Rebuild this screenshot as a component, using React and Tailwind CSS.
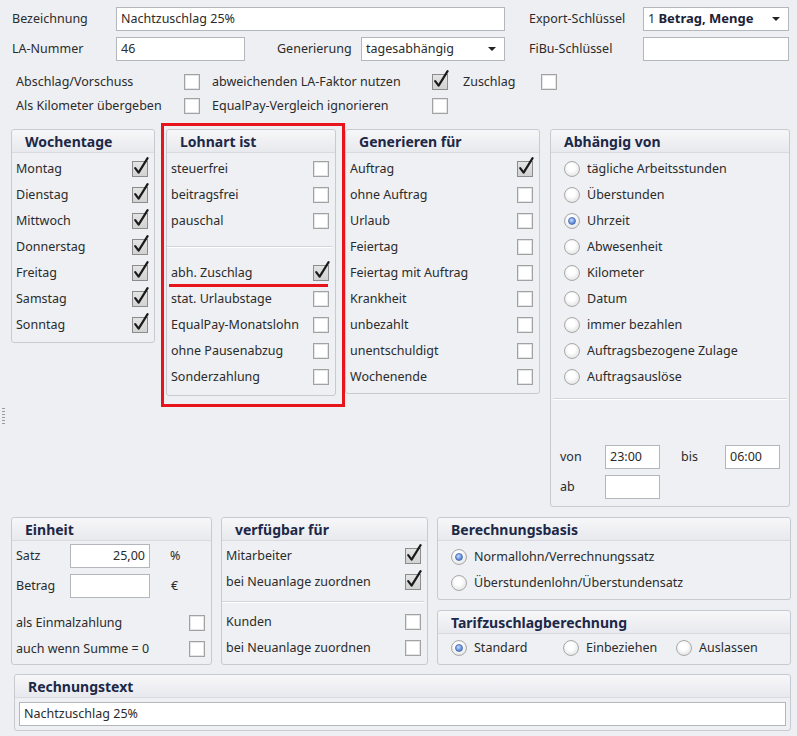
import React from "react";

// checkbox in the old Windows skin: grey frame, check mark runs out past the top edge
const Check = ({ checked }) => (
  <span className="relative inline-block w-[16px] h-[16px] shrink-0">
    {checked ? (
      <span className="absolute inset-0 border border-[#8c8c8c] bg-gradient-to-b from-[#e4e4e4] to-[#d2d2d2]" />
    ) : (
      <span className="absolute inset-0 border border-[#a2a2a2] bg-white shadow-[inset_0_0_0_1px_#e4e4e4]" />
    )}
    {checked && (
      <svg className="absolute left-0 -top-[4px] overflow-visible" width="18" height="20" viewBox="0 0 18 20">
        <path d="M3.2 11.2 L6.6 15.6 L15.6 1.2" fill="none" stroke="#1b1b1b" strokeWidth="2.2" strokeLinecap="round" strokeLinejoin="round" />
      </svg>
    )}
  </span>
);

const Radio = ({ on }) => (
  <span className="relative inline-flex items-center justify-center w-[16px] h-[16px] shrink-0 rounded-full border border-[#a9a9a9] bg-[radial-gradient(circle_at_45%_40%,#ffffff_30%,#d8d8d8_100%)]">
    {on && (
      <span className="w-[8px] h-[8px] rounded-full border border-[#4d72b8] bg-[radial-gradient(circle_at_40%_35%,#c9dcff_0%,#6f98e0_55%,#2d5bb0_100%)]" />
    )}
  </span>
);

const Group = ({ title, className, children }) => (
  <div className={`border border-[#c8cad2] rounded-[3px] bg-[#eef0f4] ${className}`}>
    <div className="h-[23px] flex items-center pl-[13px] border-b border-[#d9dae0] bg-gradient-to-b from-[#f7f7f9] to-[#e8e9ee] rounded-t-[3px] text-[14px] font-bold text-[#1c2847]">
      {title}
    </div>
    {children}
  </div>
);

const CheckRow = ({ label, checked }) => (
  <div className="flex h-[26px] items-center justify-between pl-[4px] pr-[6px]">
    <span>{label}</span>
    <Check checked={checked} />
  </div>
);

const RadioRow = ({ label, on }) => (
  <div className="flex h-[26px] items-center gap-[7px] pl-[13px]">
    <Radio on={on} />
    <span>{label}</span>
  </div>
);

const Field = ({ className, children }) => (
  <div className={`h-[24px] flex items-center px-[4px] bg-white border border-[#b4b6bd] ${className}`}>{children}</div>
);

const Select = ({ className, children }) => (
  <div className={`h-[24px] flex items-center justify-between pl-[4px] pr-[8px] bg-white border border-[#b4b6bd] ${className}`}>
    <span>{children}</span>
    <span className="w-0 h-0 border-l-[4px] border-r-[4px] border-t-[4px] border-l-transparent border-r-transparent border-t-[#222]" />
  </div>
);

const Divider = ({ className }) => (
  <div className={`flex items-center ${className}`}>
    <div className="w-full h-[2px] border-t border-[#d3d4da] border-b border-b-white" />
  </div>
);

export default function App() {
  return (
    <div className="relative w-[797px] h-[736px] overflow-hidden bg-[#eeeff3] font-['Noto_Sans',sans-serif] text-[12.5px] text-[#2b2b2b]">
      {/* splitter grip on the left edge */}
      <div className="absolute left-[2px] top-[408px] w-[3px] h-[18px] bg-[repeating-linear-gradient(to_bottom,#9a9a9a_0px,#9a9a9a_1px,transparent_1px,transparent_3px)]" />

      {/* header fields */}
      <div className="pl-[12px] pt-[7px]">
        <div className="flex items-center h-[24px]">
          <span className="w-[104px]">Bezeichnung</span>
          <Field className="w-[389px]">Nachtzuschlag 25%</Field>
          <span className="ml-[24px] w-[114px]">Export-Schlüssel</span>
          <Select className="w-[146px]">
            1 <span className="font-bold text-[13px] text-[#1c2236]">Betrag, Menge</span>
          </Select>
        </div>
        <div className="flex items-center h-[24px] mt-[6px]">
          <span className="w-[104px]">LA-Nummer</span>
          <Field className="w-[129px]">46</Field>
          <span className="ml-[32px] w-[84px]">Generierung</span>
          <Select className="w-[144px]">tagesabhängig</Select>
          <span className="ml-[24px] w-[114px]">FiBu-Schlüssel</span>
          <Field className="w-[146px]" />
        </div>
        <div className="flex items-center h-[16px] mt-[13px] pl-[4px]">
          <span className="w-[168px]">Abschlag/Vorschuss</span>
          <Check />
          <span className="ml-[12px] w-[220px]">abweichenden LA-Faktor nutzen</span>
          <Check checked />
          <span className="ml-[15px] w-[78px]">Zuschlag</span>
          <Check />
        </div>
        <div className="flex items-center h-[16px] mt-[8px] pl-[4px]">
          <span className="w-[168px]">Als Kilometer übergeben</span>
          <Check />
          <span className="ml-[12px] w-[220px]">EqualPay-Vergleich ignorieren</span>
          <Check />
        </div>
      </div>

      {/* option groups */}
      <div className="flex items-start pl-[11px] mt-[15px] h-[378px]">
        <Group title="Wochentage" className="w-[144px] h-[214px]">
          <div className="pt-[3px]">
            {["Montag", "Dienstag", "Mittwoch", "Donnerstag", "Freitag", "Samstag", "Sonntag"].map((d) => (
              <CheckRow key={d} label={d} checked />
            ))}
          </div>
        </Group>

        <div className="relative ml-[11px]">
          <Group title="Lohnart ist" className="w-[170px] h-[267px]">
            <div className="pt-[3px]">
              <CheckRow label="steuerfrei" />
              <CheckRow label="beitragsfrei" />
              <CheckRow label="pauschal" />
              <Divider className="h-[26px] pr-[3px]" />
              <div className="relative">
                <CheckRow label="abh. Zuschlag" checked />
                <div className="absolute left-[2px] right-[7px] top-[24px] h-[3px] bg-[#e8141c]" />
              </div>
              <CheckRow label="stat. Urlaubstage" />
              <CheckRow label="EqualPay-Monatslohn" />
              <CheckRow label="ohne Pausenabzug" />
              <CheckRow label="Sonderzahlung" />
            </div>
          </Group>
          <div className="absolute -left-[5px] -top-[6px] w-[184px] h-[284px] border-[3px] border-[#e8141c] pointer-events-none" />
        </div>

        <Group title="Generieren für" className="ml-[9px] w-[195px] h-[265px]">
          <div className="pt-[3px]">
            <CheckRow label="Auftrag" checked />
            {["ohne Auftrag", "Urlaub", "Feiertag", "Feiertag mit Auftrag", "Krankheit", "unbezahlt", "unentschuldigt", "Wochenende"].map((l) => (
              <CheckRow key={l} label={l} />
            ))}
          </div>
        </Group>

        <Group title="Abhängig von" className="ml-[10px] w-[240px] h-[378px]">
          <div className="pt-[3px]">
            <RadioRow label="tägliche Arbeitsstunden" />
            <RadioRow label="Überstunden" />
            <RadioRow label="Uhrzeit" on />
            <RadioRow label="Abwesenheit" />
            <RadioRow label="Kilometer" />
            <RadioRow label="Datum" />
            <RadioRow label="immer bezahlen" />
            <RadioRow label="Auftragsbezogene Zulage" />
            <RadioRow label="Auftragsauslöse" />
          </div>
          <Divider className="h-[18px] px-[2px]" />
          <div className="pl-[9px] mt-[37px]">
            <div className="flex items-center h-[24px]">
              <span className="w-[45px]">von</span>
              <Field className="w-[55px]">23:00</Field>
              <span className="ml-[21px] w-[44px]">bis</span>
              <Field className="w-[55px]">06:00</Field>
            </div>
            <div className="flex items-center h-[24px] mt-[6px]">
              <span className="w-[45px]">ab</span>
              <Field className="w-[55px]" />
            </div>
          </div>
        </Group>
      </div>

      {/* unit, availability and calculation basis */}
      <div className="flex items-start pl-[11px] mt-[10px]">
        <Group title="Einheit" className="w-[201px] h-[148px]">
          <div className="pl-[4px] pr-[6px] pt-[3px]">
            <div className="flex items-center h-[24px]">
              <span className="w-[54px]">Satz</span>
              <Field className="w-[80px] justify-end">25,00</Field>
              <span className="ml-[20px]">%</span>
            </div>
            <div className="flex items-center h-[24px] mt-[6px]">
              <span className="w-[54px]">Betrag</span>
              <Field className="w-[80px]" />
              <span className="ml-[21px]">€</span>
            </div>
          </div>
          <div className="mt-[12px]">
            <CheckRow label="als Einmalzahlung" />
            <CheckRow label="auch wenn Summe = 0" />
          </div>
        </Group>

        <Group title="verfügbar für" className="ml-[9px] w-[207px] h-[148px]">
          <div className="pt-[2px]">
            <CheckRow label="Mitarbeiter" checked />
            <CheckRow label="bei Neuanlage zuordnen" checked />
            <Divider className="h-[14px] pr-[3px]" />
            <CheckRow label="Kunden" />
            <CheckRow label="bei Neuanlage zuordnen" />
          </div>
        </Group>

        <div className="ml-[9px] w-[354px]">
          <Group title="Berechnungsbasis" className="h-[83px]">
            <div className="pt-[3px]">
              <RadioRow label="Normallohn/Verrechnungssatz" on />
              <RadioRow label="Überstundenlohn/Überstundensatz" />
            </div>
          </Group>
          <Group title="Tarifzuschlagberechnung" className="mt-[10px] h-[55px]">
            <div className="flex pt-[1px]">
              <div className="w-[112px]"><RadioRow label="Standard" on /></div>
              <div className="w-[113px]"><RadioRow label="Einbeziehen" /></div>
              <RadioRow label="Auslassen" />
            </div>
          </Group>
        </div>
      </div>

      <div className="ml-[14px] mt-[9px] w-[777px]">
        <Group title="Rechnungstext" className="h-[57px]">
          <div className="px-[4px] pt-[4px]">
            <Field className="w-full">Nachtzuschlag 25%</Field>
          </div>
        </Group>
      </div>
    </div>
  );
}
